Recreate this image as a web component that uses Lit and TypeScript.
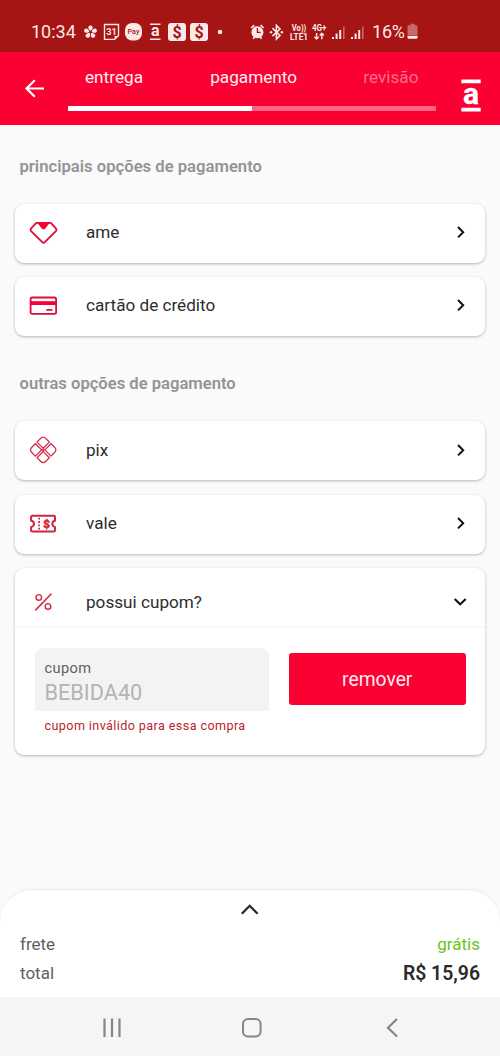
import { LitElement, html, svg, css, nothing } from "lit";
import { customElement, property } from "lit/decorators.js";

const chevronRight = html`<svg width="10" height="14" viewBox="0 0 10 14" fill="none" stroke="#111" stroke-width="2"><path d="M2 2 7.2 7.2 2 12.4"/></svg>`;
const chevronDown = html`<svg width="14" height="10" viewBox="0 0 14 10" fill="none" stroke="#111" stroke-width="2"><path d="M1.7 2 7.2 7.3 12.7 2"/></svg>`;

const icons = {
  ame: svg`<g transform="translate(.3 .2)"><path d="M7 4.7H21.5L26.6 10.2Q27.6 11.6 26.6 12.9L15.4 24Q14.2 25 13 24L1.8 12.9Q.8 11.6 1.8 10.2Z" fill="none" stroke="#dc0d38" stroke-width="1.8" stroke-linejoin="round"/><path d="M8 4.5H20.5L16 10.3Q14.2 12 12.4 10.3Z" fill="#f80032"/></g>`,
  card: svg`<g transform="translate(.6 .3)"><rect x="1" y="6.2" width="25.5" height="16.4" rx="1.6" fill="none" stroke="#dc0d38" stroke-width="1.8"/><path d="M1 9.9H26.5V13.7H1Z" fill="#f80032"/><path d="M17.5 18.6h4.5" stroke="#dc0d38" stroke-width="1.9" stroke-linecap="round"/></g>`,
  pix: svg`<g transform="translate(14.2 14.9) rotate(45) scale(1.15)" fill="none" stroke="#d62645" stroke-width="1.05"><path d="M-1-1V-8.6H-5.4Q-8.6-8.6-8.6-5.4V-1Z"/><path d="M1-1H8.6V-5.4Q8.6-8.6 5.4-8.6H1Z"/><path d="M1 1V8.6H5.4Q8.6 8.6 8.6 5.4V1Z"/><path d="M-1 1H-8.6V5.4Q-8.6 8.6-5.4 8.6H-1Z"/><path d="M-1-1 1 1M1-1-1 1"/></g>`,
  ticket: svg`<g transform="translate(.8 .3)"><path d="M2.7 6.4H24Q25.2 6.4 25.2 7.6V11.2Q22.5 12.2 22.5 14.5T25.2 17.8V21Q25.2 22.3 24 22.3H2.7Q1.3 22.3 1.3 21V17.8Q4.2 16.8 4.2 14.5T1.3 11.2V7.6Q1.3 6.4 2.7 6.4Z" fill="none" stroke="#d6213f" stroke-width="2"/><path d="M9.3 8.5V21" stroke="#d6213f" stroke-width="1.7" stroke-dasharray="1.8 1.5"/><text x="16.7" y="18.5" text-anchor="middle" font-size="11.5" font-weight="900" fill="#d6213f" stroke="#d6213f" stroke-width=".5">$</text></g>`,
  percent: svg`<g fill="none" stroke="#d32b45" stroke-width="1.4"><path d="M6.3 22.4 22.4 5.8" stroke-width="1.6"/><circle cx="9.8" cy="9.4" r="2.8"/><circle cx="19" cy="18.4" r="2.8"/></g>`,
};

const fontStack = css`font-family: Roboto, "Liberation Sans", sans-serif;`;

@customElement("status-bar")
class StatusBar extends LitElement {
  static styles = css`
    :host { display: flex; height: 52px; padding: 12px 0 0 31px; box-sizing: border-box; background: #a61414; color: #fbe9e9; align-items: center; ${fontStack} }
    svg { flex: none; display: block; fill: currentColor; }
    .clock { width: 45px; font-size: 18px; line-height: 20px; margin: 0 8px 1px 0; }
    .apps { display: flex; width: 163px; }
    .apps svg { margin-right: 4px; }
    .radio { display: flex; gap: 4px; }
    .volte { margin-left: 2px; }
    .pct { font-size: 18px; line-height: 20px; margin: 0 0 1px 6px; width: 35px; letter-spacing: -.2px; white-space: nowrap; }
  `;
  money() {
    return html`<svg width="18" height="20"><rect x="0" y="1" width="18" height="18" rx="3"/><text x="9" y="15.6" text-anchor="middle" font-size="16" font-weight="700" fill="#a61414">$</text></svg>`;
  }
  signal() {
    return html`<svg width="15" height="20"><rect x="0" y="15" width="2" height="2"/><rect x="3.6" y="11.5" width="2" height="5.5"/><rect x="7.2" y="8" width="2" height="9"/><rect x="11" y="4.5" width="1.6" height="12.5" opacity=".4"/></svg>`;
  }
  render() {
    return html`
      <span class="clock">10:34</span>
      <div class="apps">
        <svg width="15" height="20"><g transform="translate(6.5 10)">${[0, 72, 144, 216, 288].map((a) => svg`<path transform="rotate(${a})" d="M0-1.2C-3-3.2-2.8-6.6 0-6.6S3-3.2 0-1.2Z"/>`)}</g></svg>
        <svg width="18" height="20"><path d="M1.5 2.5H15.5V13.5L11.5 17.4H1.5Z" fill="none" stroke="currentColor" stroke-width="1.4"/><path d="M11.6 17.8V14H15.8Z"/><text x="8.4" y="12.9" text-anchor="middle" font-size="9.2" font-weight="700">31</text></svg>
        <svg width="18" height="20"><rect x="0" y="1" width="17" height="17.5" rx="7"/><text x="8.5" y="12" text-anchor="middle" font-size="7.2" font-weight="500" fill="#a61414">Pay</text></svg>
        <svg width="17" height="20"><path d="M3 2.2h10.5M3 17.2h10.5" stroke="currentColor" stroke-width="1.4"/><text x="8.3" y="14.4" text-anchor="middle" font-size="16" font-weight="700">a</text></svg>
        ${this.money()}${this.money()}
        <svg width="12" height="20"><circle cx="8" cy="10" r="2.3"/></svg>
      </div>
      <div class="radio">
        <svg width="18" height="20"><g transform="translate(3.2 -.4)"><circle cx="7.2" cy="10.6" r="6"/><path d="M1 6.4 4 3.6M13.4 6.4 10.4 3.6M3 17.3 4.5 15M11.4 17.3 9.9 15" stroke="currentColor" stroke-width="1.7"/><path d="M7.2 6.5V10.8H10.5" fill="none" stroke="#a61414" stroke-width="1.3"/></g></svg>
        <svg width="15" height="20"><path d="M3.4 6.2 11 13.4 7.4 17V3.4L11 7 3.4 14.2" fill="none" stroke="currentColor" stroke-width="1.6"/><circle cx="2" cy="10.2" r="1.2"/><circle cx="12.9" cy="10.2" r="1.2"/></svg>
        <svg class="volte" width="18" height="20"><text x="1.8" y="9.2" font-size="8.2" font-weight="700" textLength="14.5" lengthAdjust="spacingAndGlyphs">Vo))</text><text x="0" y="17.8" font-size="8.6" font-weight="700" textLength="18" lengthAdjust="spacingAndGlyphs">LTE1</text></svg>
        <svg width="16" height="20"><text x="0" y="9.2" font-size="8.2" font-weight="700" textLength="14.5" lengthAdjust="spacingAndGlyphs">4G+</text><path d="M4.6 11V17M2.5 14.8 4.6 17 6.7 14.8M9.8 17.3V11.5M7.7 13.5 9.8 11.3 11.9 13.5" fill="none" stroke="currentColor" stroke-width="1.4"/></svg>
        ${this.signal()}${this.signal()}
      </div>
      <span class="pct">16%</span>
      <svg width="12" height="20"><path d="M1.5 3.3h2V1.7H7.7V3.3H9.5Q10.5 3.3 10.5 4.5V13H.5V4.5Q.5 3.3 1.5 3.3Z" opacity=".4"/><path d="M.5 13.8H10.5V15.4Q10.5 16.8 9.2 16.8H1.8Q.5 16.8 .5 15.4Z"/></svg>`;
  }
}

@customElement("checkout-header")
class CheckoutHeader extends LitElement {
  static styles = css`
    :host { display: grid; grid-template-columns: 68px 368px 64px; height: 73px; background: #fa0033; color: #ffeff2; ${fontStack} }
    svg { display: block; }
    .back { padding: 26px 0 0 24px; }
    .steps { padding-top: 15.4px; }
    .labels { display: flex; justify-content: space-between; padding: 0 17.5px 0 17px; font-size: 17.2px; line-height: 21px; height: 39.1px; }
    .current { margin-left: 1px; }
    .muted { color: #fd6f8b; }
    .track { height: 5px; background: #fd6583; }
    .done { height: 100%; width: 50%; background: #fff; }
    .brand { padding: 20px 0 0 25px; }
  `;
  render() {
    return html`
      <div class="back"><svg width="22" height="22" fill="none" stroke="#fff" stroke-width="2.2"><path d="M20 10.5H2.5M10.8 2.2 2.5 10.5 10.8 18.8"/></svg></div>
      <div class="steps">
        <div class="labels"><span>entrega</span><span class="current">pagamento</span><span class="muted">revisão</span></div>
        <div class="track"><div class="done"></div></div>
      </div>
      <div class="brand"><svg width="22" height="46"><path d="M.3 9.4h19.4M.3 37.6h19.4" stroke="#fff" stroke-width="3.6"/><text x="10" y="32" text-anchor="middle" font-size="30" font-weight="700" fill="#fff" stroke="#fff" stroke-width=".3">a</text></svg></div>`;
  }
}

@customElement("payment-row")
class PaymentRow extends LitElement {
  @property() icon: keyof typeof icons = "ame";
  @property() label = "";
  @property({ type: Boolean, reflect: true }) open = false;
  static styles = css`
    :host { display: block; background: #fff; border-radius: 9px; box-shadow: 0 1px 3px rgba(0,0,0,.28); ${fontStack} }
    .row { display: flex; align-items: center; height: 59px; box-sizing: border-box; padding: 0 19px 2px 14px; color: #2d2d2d; font-size: 17.15px; }
    :host([open]) .row { border-bottom: 2px solid #f8f8f8; height: 60px; padding: 10.6px 18px 0 14px; }
    .icon { width: 57px; flex: none; }
    .label { flex: 1; line-height: 22px; }
    svg { display: block; }
  `;
  render() {
    return html`<div class="row">
        <svg class="icon" width="57" height="29">${icons[this.icon]}</svg>
        <span class="label">${this.label}</span>
        ${this.open ? chevronDown : chevronRight}
      </div>${this.open ? html`<slot></slot>` : nothing}`;
  }
}

@customElement("app-root")
class AppRoot extends LitElement {
  static styles = css`
    :host { display: flex; flex-direction: column; height: 1056px; width: 500px; overflow: hidden; background: #fafafa; ${fontStack} }
    svg { display: block; }
    main { flex: 1; padding: 0 15px; display: flex; flex-direction: column; }
    h2 { margin: 0 0 0 4.5px; font-size: 16.65px; line-height: 22px; font-weight: 600; color: #949494; }
    .first { margin-top: 31px; }
    .second { margin-top: 37.5px; font-size: 16.6px; }
    .list { display: grid; gap: 14.3px; margin-top: 25.6px; }
    .second + .list { margin-top: 25.9px; }
    .coupon { display: flex; height: 127px; box-sizing: border-box; padding: 20px 19.5px 0 20px; gap: 20px; }
    .field { width: 234px; }
    .box { height: 63px; background: #f3f3f3; border-radius: 9px 9px 0 0; box-sizing: border-box; padding: 10px 0 0 9.5px; }
    .caption { font-size: 14.6px; line-height: 20px; color: #606060; letter-spacing: .4px; }
    .value { font-size: 21.7px; line-height: 29px; color: #b4b4b4; }
    .error { margin: 6px 0 0 9.5px; font-size: 12.6px; line-height: 17px; color: #b91f2f; letter-spacing: .4px; white-space: nowrap; }
    .remove { margin-top: 5px; width: 176.5px; height: 52.5px; border: 0; border-radius: 3px; padding: 0; background: #fa0033; color: #ffe9ed; font: 19.3px/53px Roboto, sans-serif; }
    .summary { height: 107px; box-sizing: border-box; background: #fff; border-radius: 32px 32px 0 0; box-shadow: 0 -1px 2px rgba(0,0,0,.07); padding: 13px 20px 0; color: #606060; font-size: 17px; }
    .handle { margin: 0 auto; }
    .line { display: flex; justify-content: space-between; line-height: 29px; }
    .line.freight { margin-top: 13px; }
    .free { color: #69c41b; }
    .total { font-size: 19.4px; font-weight: 600; color: #2a2a2a; }
    .nav { height: 59px; background: #f5f5f5; display: flex; }
    .nav svg { margin: 20px 0 0 102px; }
    .nav .home { margin-left: 119px; }
    .nav .prev { margin-left: 122px; }
  `;
  render() {
    return html`
      <status-bar></status-bar>
      <checkout-header></checkout-header>
      <main>
        <h2 class="first">principais opções de pagamento</h2>
        <div class="list">
          <payment-row icon="ame" label="ame"></payment-row>
          <payment-row icon="card" label="cartão de crédito"></payment-row>
        </div>
        <h2 class="second">outras opções de pagamento</h2>
        <div class="list">
          <payment-row icon="pix" label="pix"></payment-row>
          <payment-row icon="ticket" label="vale"></payment-row>
          <payment-row icon="percent" label="possui cupom?" open>
            <div class="coupon">
              <div class="field">
                <div class="box"><div class="caption">cupom</div><div class="value">BEBIDA40</div></div>
                <div class="error">cupom inválido para essa compra</div>
              </div>
              <button class="remove">remover</button>
            </div>
          </payment-row>
        </div>
      </main>
      <section class="summary">
        <svg class="handle" width="20" height="14" fill="none" stroke="#292929" stroke-width="2.3"><path d="M1.8 10.8 9.7 2.8 17.6 10.8"/></svg>
        <div class="line freight"><span>frete</span><span class="free">grátis</span></div>
        <div class="line"><span>total</span><span class="total">R$ 15,96</span></div>
      </section>
      <nav class="nav">
        <svg width="20" height="22" stroke="#858585" stroke-width="2.2"><path d="M2.5 1.5V20M10 1.5V20M17.5 1.5V20"/></svg>
        <svg class="home" width="22" height="22" fill="none" stroke="#858585" stroke-width="2"><rect x="2" y="2" width="17.6" height="17.6" rx="5"/></svg>
        <svg class="prev" width="14" height="22" fill="none" stroke="#858585" stroke-width="2.2"><path d="M12 2 3 10.7 12 19.5"/></svg>
      </nav>`;
  }
}
